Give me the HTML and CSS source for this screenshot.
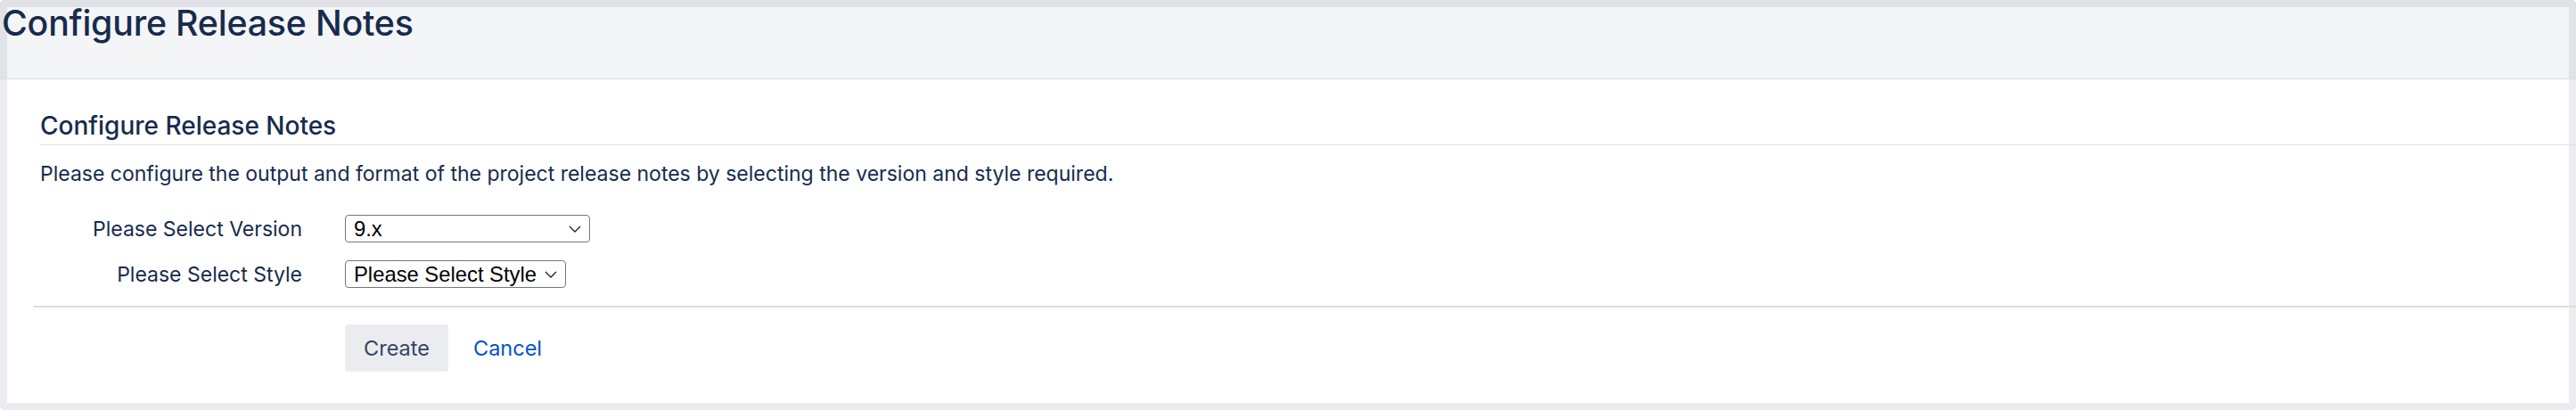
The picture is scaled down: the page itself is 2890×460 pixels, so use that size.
FILE: index.html
```html
<!DOCTYPE html>
<html lang="en">
<head>
<meta charset="utf-8">
<title>Configure Release Notes</title>
<link rel="stylesheet" href="styles.css">
</head>
<body>
<div class="page">
  <header class="page-header">
    <h1 class="page-title">Configure Release Notes</h1>
  </header>
  <main class="page-body">
    <form class="release-form">
      <h2 class="form-title">Configure Release Notes</h2>
      <p class="form-desc">Please configure the output and format of the project release notes by selecting the version and style required.</p>
      <div class="fields">
        <div class="field">
          <label class="field-label" for="version">Please Select Version</label>
          <div class="select-wrap select-version">
            <select id="version" class="select"><option>9.x</option></select>
            <svg class="chevron" viewBox="0 0 14 8" width="14" height="8"><path d="M1 1l6 6 6-6" fill="none" stroke="#222" stroke-width="1.3"/></svg>
          </div>
        </div>
        <div class="field">
          <label class="field-label" for="style">Please Select Style</label>
          <div class="select-wrap select-style">
            <select id="style" class="select"><option>Please Select Style</option></select>
            <svg class="chevron" viewBox="0 0 14 8" width="14" height="8"><path d="M1 1l6 6 6-6" fill="none" stroke="#222" stroke-width="1.3"/></svg>
          </div>
        </div>
      </div>
      <div class="buttons">
        <button type="button" class="btn">Create</button>
        <a class="cancel" href="#">Cancel</a>
      </div>
    </form>
  </main>
</div>
</body>
</html>
```
FILE: styles.css
```css
html, body {
  margin: 0;
  padding: 0;
  background: #ffffff;
}
body {
  font-family: Inter, "Noto Sans", sans-serif;
  color: #172b4d;
}
.page {
  width: 2890px;
  height: 460px;
  display: flex;
  flex-direction: column;
}
.page-header {
  height: 80px;
  background: #f4f5f7;
  border: 8px solid #e0e2e7;
  border-bottom: 1px solid #dcdee3;
  border-radius: 5px 5px 0 0;
}
.page-title {
  margin: -4px 0 0 -6px;
  font-size: 39.3px;
  font-weight: 500;
  line-height: 44px;
  letter-spacing: -0.2px;
  color: #172b4d;
}
.page-body {
  flex: 1;
  background: #fff;
  border: 8px solid #ebecf0;
  border-top: 0;
  border-radius: 0 0 5px 5px;
}
.release-form {
  padding: 35px 0 0 29px;
  margin-right: -8px;
}
.form-title {
  margin: 0 0 0 8px;
  font-size: 28px;
  font-weight: 500;
  line-height: 34px;
  padding-bottom: 4px;
  border-bottom: 1px solid #dfe1e6;
}
.form-desc {
  margin: 18px 0 0 8px;
  font-size: 23px;
  line-height: 28px;
}
.fields {
  display: flex;
  flex-direction: column;
  gap: 20px;
  margin-top: 32px;
  padding-bottom: 20px;
  border-bottom: 2px solid #dcdde1;
}
.field {
  display: flex;
  align-items: center;
}
.field-label {
  width: 350px;
  text-align: right;
  font-size: 23px;
  line-height: 28px;
  color: #172b4d;
  padding-right: 48px;
  box-sizing: border-box;
}
.select-wrap {
  position: relative;
  height: 31px;
}
.select-version { width: 275px; }
.select-style { width: 248px; }
.select {
  appearance: none;
  -webkit-appearance: none;
  display: block;
  width: 100%;
  height: 31px;
  box-sizing: border-box;
  border: 1px solid #767676;
  border-radius: 4px;
  background: #fff;
  padding: 0 0 0 9px;
  font-family: "Liberation Sans", Arial, sans-serif;
  font-size: 23.8px;
  color: #000;
}
.chevron {
  position: absolute;
  right: 10px;
  top: 12px;
  pointer-events: none;
}
.buttons {
  display: flex;
  align-items: center;
  gap: 28px;
  padding: 19px 0 0 350px;
}
.btn {
  width: 116px;
  height: 53px;
  border: 0;
  border-radius: 4px;
  background: #ebecf0;
  color: #344563;
  font-family: Inter, sans-serif;
  font-size: 23.5px;
}
.cancel {
  color: #0052cc;
  text-decoration: none;
  font-size: 23.5px;
}
```
